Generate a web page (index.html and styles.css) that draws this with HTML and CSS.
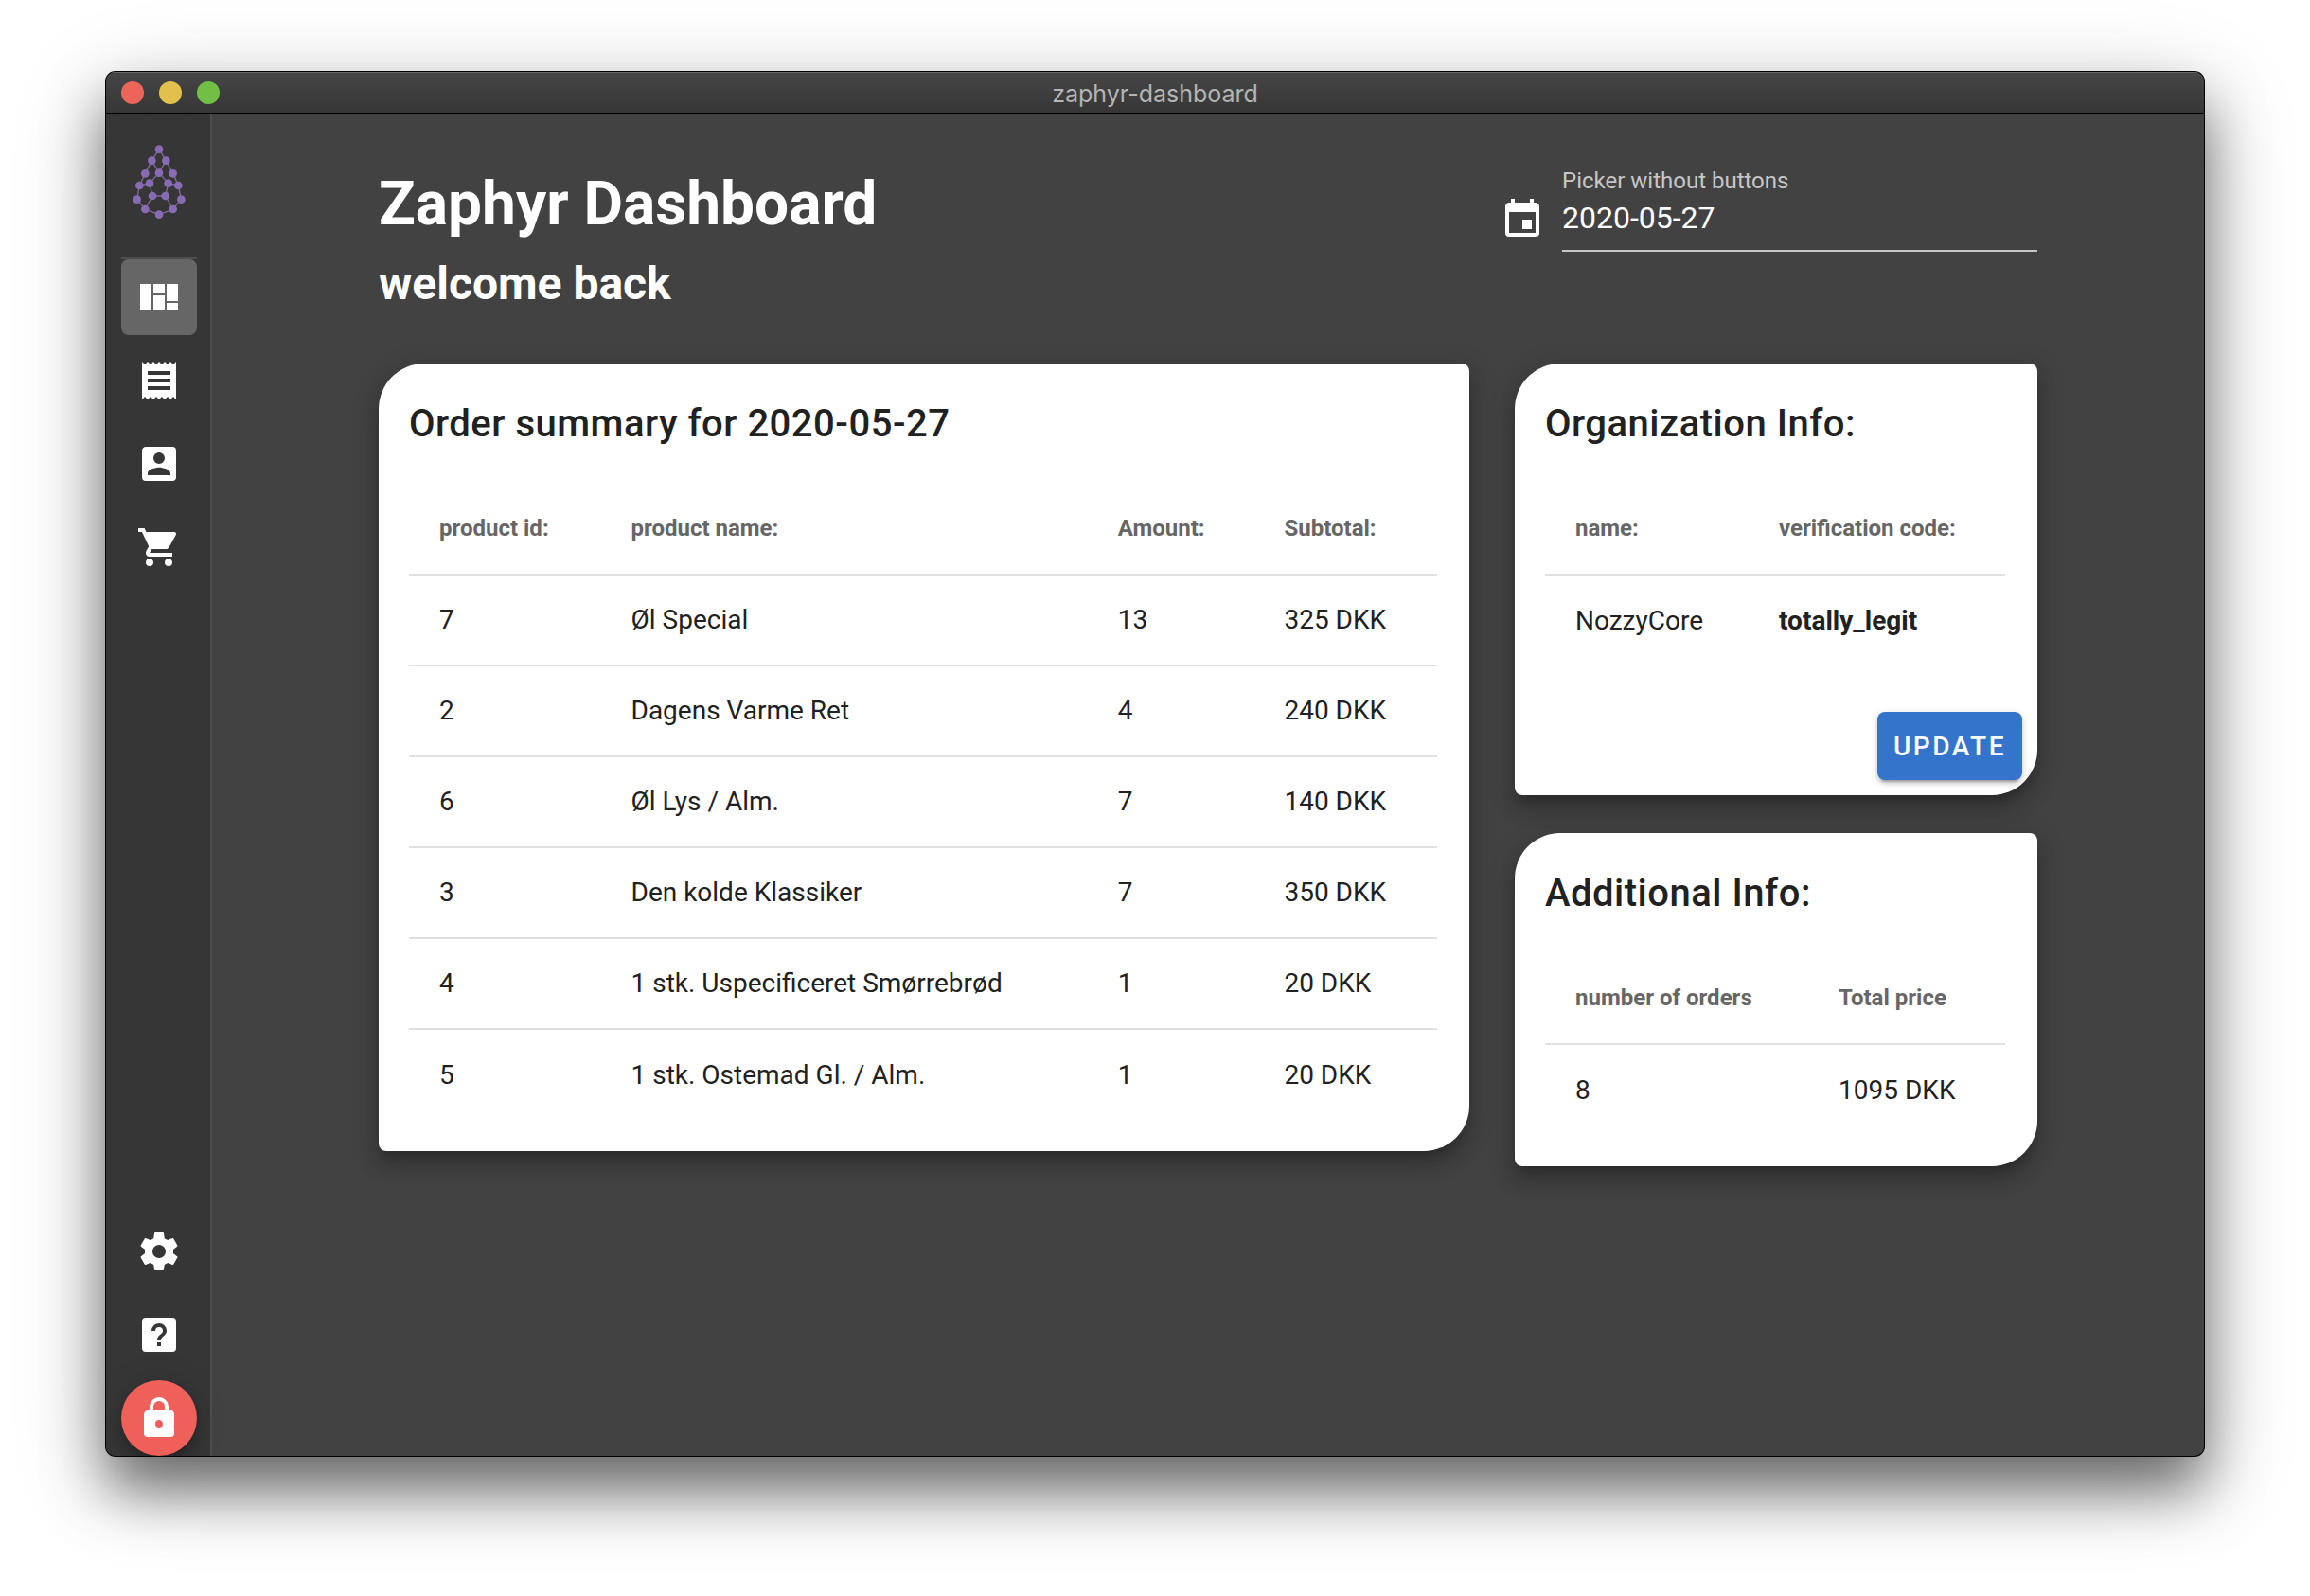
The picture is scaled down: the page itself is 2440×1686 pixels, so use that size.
FILE: index.html
```html
<!DOCTYPE html>
<html lang="en">
<head>
<meta charset="utf-8">
<title>zaphyr-dashboard</title>
<link rel="stylesheet" href="styles.css">
</head>
<body>
<div class="window">
  <header class="titlebar">
    <div class="traffic">
      <button class="light light-close" type="button" aria-label="Close"></button>
      <button class="light light-minimize" type="button" aria-label="Minimize"></button>
      <button class="light light-zoom" type="button" aria-label="Zoom"></button>
    </div>
    <span class="titlebar-text">zaphyr-dashboard</span>
  </header>
  <div class="app">
    <aside class="sidebar">
      <svg class="logo" viewBox="144 276 180 240" aria-hidden="true">
        <path class="logo-links" d="M234 293L211 329L190 370L172 408L164 452L190 483L234 500L278 483L304 452L295 408L278 370L256 329ZM211 329L234 368L256 329M172 408L204 401L234 368L263 401L295 408M204 401L213 441L190 483M263 401L254 441L278 483M213 441H254"/>
        <g class="logo-dots">
          <circle cx="234" cy="293" r="13"/><circle cx="211" cy="329" r="13"/><circle cx="256" cy="329" r="13"/>
          <circle cx="190" cy="370" r="13"/><circle cx="234" cy="368" r="13"/><circle cx="278" cy="370" r="13"/>
          <circle cx="172" cy="408" r="13"/><circle cx="204" cy="401" r="13"/><circle cx="263" cy="401" r="13"/>
          <circle cx="295" cy="408" r="13"/><circle cx="164" cy="452" r="13"/><circle cx="213" cy="441" r="13"/>
          <circle cx="254" cy="441" r="13"/><circle cx="304" cy="452" r="13"/><circle cx="190" cy="483" r="13"/>
          <circle cx="278" cy="483" r="13"/><circle cx="234" cy="500" r="13"/>
        </g>
      </svg>
      <nav class="nav nav-main" aria-label="Main">
        <a class="nav-item nav-item-active" href="#dashboard" aria-label="Dashboard" aria-current="page"><svg class="icon" viewBox="0 0 24 24"><path d="M2,5V19H8V5H2M9,5V10H15V5H9M16,5V14H22V5H16M9,11V19H15V11H9M16,15V19H22V15H16Z"/></svg></a>
        <a class="nav-item" href="#orders" aria-label="Orders"><svg class="icon" viewBox="0 0 24 24"><path d="M3,22L4.5,20.5L6,22L7.5,20.5L9,22L10.5,20.5L12,22L13.5,20.5L15,22L16.5,20.5L18,22L19.5,20.5L21,22V2L19.5,3.5L18,2L16.5,3.5L15,2L13.5,3.5L12,2L10.5,3.5L9,2L7.5,3.5L6,2L4.5,3.5L3,2M18,9H6V7H18M18,13H6V11H18M18,17H6V15H18V17Z"/></svg></a>
        <a class="nav-item" href="#account" aria-label="Account"><svg class="icon" viewBox="0 0 24 24"><path d="M6,17C6,15 10,13.9 12,13.9C14,13.9 18,15 18,17V18H6M15,9A3,3 0 0,1 12,12A3,3 0 0,1 9,9A3,3 0 0,1 12,6A3,3 0 0,1 15,9M3,5V19A2,2 0 0,0 5,21H19A2,2 0 0,0 21,19V5A2,2 0 0,0 19,3H5C3.89,3 3,3.9 3,5Z"/></svg></a>
        <a class="nav-item" href="#products" aria-label="Products"><svg class="icon" viewBox="0 0 24 24"><path d="M17,18C15.89,18 15,18.89 15,20A2,2 0 0,0 17,22A2,2 0 0,0 19,20C19,18.89 18.1,18 17,18M1,2V4H3L6.6,11.59L5.24,14.04C5.09,14.32 5,14.65 5,15A2,2 0 0,0 7,17H19V15H7.42A0.25,0.25 0 0,1 7.17,14.75C7.17,14.7 7.18,14.66 7.2,14.63L8.1,13H15.55C16.3,13 16.96,12.58 17.3,11.97L20.88,5.5C20.95,5.34 21,5.17 21,5A1,1 0 0,0 20,4H5.21L4.27,2M7,18C5.89,18 5,18.89 5,20A2,2 0 0,0 7,22A2,2 0 0,0 9,20C9,18.89 8.1,18 7,18Z"/></svg></a>
      </nav>
      <nav class="nav" aria-label="Application">
        <a class="nav-item" href="#settings" aria-label="Settings"><svg class="icon" viewBox="0 0 24 24"><path d="M12,15.5A3.5,3.5 0 0,1 8.5,12A3.5,3.5 0 0,1 12,8.5A3.5,3.5 0 0,1 15.5,12A3.5,3.5 0 0,1 12,15.5M19.43,12.97C19.47,12.65 19.5,12.33 19.5,12C19.5,11.67 19.47,11.34 19.43,11L21.54,9.37C21.73,9.22 21.78,8.95 21.66,8.73L19.66,5.27C19.54,5.05 19.27,4.96 19.05,5.05L16.56,6.05C16.04,5.66 15.5,5.32 14.87,5.07L14.5,2.42C14.46,2.18 14.25,2 14,2H10C9.75,2 9.54,2.18 9.5,2.42L9.13,5.07C8.5,5.32 7.96,5.66 7.44,6.05L4.95,5.05C4.73,4.96 4.46,5.05 4.34,5.27L2.34,8.73C2.21,8.95 2.27,9.22 2.46,9.37L4.57,11C4.53,11.34 4.5,11.67 4.5,12C4.5,12.33 4.53,12.65 4.57,12.97L2.46,14.63C2.27,14.78 2.21,15.05 2.34,15.27L4.34,18.73C4.46,18.95 4.73,19.03 4.95,18.95L7.44,17.94C7.96,18.34 8.5,18.68 9.13,18.93L9.5,21.58C9.54,21.82 9.75,22 10,22H14C14.25,22 14.46,21.82 14.5,21.58L14.87,18.93C15.5,18.67 16.04,18.34 16.56,17.94L19.05,18.95C19.27,19.03 19.54,18.95 19.66,18.73L21.66,15.27C21.78,15.05 21.73,14.78 21.54,14.63L19.43,12.97Z"/></svg></a>
        <a class="nav-item" href="#help" aria-label="Help"><svg class="icon" viewBox="0 0 24 24"><path d="M11,18H13V16H11V18M12,6A4,4 0 0,0 8,10H10A2,2 0 0,1 12,8A2,2 0 0,1 14,10C14,12 11,11.75 11,15H13C13,12.75 16,12.5 16,10A4,4 0 0,0 12,6M5,3H19A2,2 0 0,1 21,5V19A2,2 0 0,1 19,21H5A2,2 0 0,1 3,19V5A2,2 0 0,1 5,3Z"/></svg></a>
        <button class="nav-item lock" type="button" aria-label="Lock"><svg class="icon" viewBox="0 0 24 24"><path d="M12,17A2,2 0 0,0 14,15C14,13.89 13.1,13 12,13A2,2 0 0,0 10,15A2,2 0 0,0 12,17M18,8A2,2 0 0,1 20,10V20A2,2 0 0,1 18,22H6A2,2 0 0,1 4,20V10C4,8.89 4.9,8 6,8H7V6A5,5 0 0,1 12,1A5,5 0 0,1 17,6V8H18M12,3A3,3 0 0,0 9,6V8H15V6A3,3 0 0,0 12,3Z"/></svg></button>
      </nav>
    </aside>
    <main class="main">
      <div class="container">
        <div class="page-head">
          <div>
            <h1 class="page-title">Zaphyr Dashboard</h1>
            <h2 class="page-subtitle">welcome back</h2>
          </div>
          <div class="picker">
            <svg class="icon picker-icon" viewBox="0 0 24 24" aria-hidden="true"><path d="M19,19H5V8H19M16,1V3H8V1H6V3H5C3.89,3 3,3.89 3,5V19A2,2 0 0,0 5,21H19A2,2 0 0,0 21,19V5C21,3.89 20.1,3 19,3H18V1M17,12H12V17H17V12Z"/></svg>
            <div class="picker-field">
              <label class="picker-label" for="date">Picker without buttons</label>
              <input class="picker-input" id="date" type="text" value="2020-05-27" readonly>
            </div>
          </div>
        </div>
        <div class="cards">
          <section class="card card-orders">
            <h3 class="card-title">Order summary for 2020-05-27</h3>
            <div class="card-body">
              <table class="table">
                <thead><tr><th>product id:</th><th>product name:</th><th>Amount:</th><th>Subtotal:</th></tr></thead>
                <tbody>
                  <tr><td>7</td><td>Øl Special</td><td>13</td><td>325 DKK</td></tr>
                  <tr><td>2</td><td>Dagens Varme Ret</td><td>4</td><td>240 DKK</td></tr>
                  <tr><td>6</td><td>Øl Lys / Alm.</td><td>7</td><td>140 DKK</td></tr>
                  <tr><td>3</td><td>Den kolde Klassiker</td><td>7</td><td>350 DKK</td></tr>
                  <tr><td>4</td><td>1 stk. Uspecificeret Smørrebrød</td><td>1</td><td>20 DKK</td></tr>
                  <tr><td>5</td><td>1 stk. Ostemad Gl. / Alm.</td><td>1</td><td>20 DKK</td></tr>
                </tbody>
              </table>
            </div>
          </section>
          <div class="side">
            <section class="card">
              <h3 class="card-title">Organization Info:</h3>
              <div class="card-body">
                <table class="table">
                  <thead><tr><th>name:</th><th>verification code:</th></tr></thead>
                  <tbody><tr><td>NozzyCore</td><td><strong>totally_legit</strong></td></tr></tbody>
                </table>
              </div>
              <div class="card-actions"><button class="button" type="button">UPDATE</button></div>
            </section>
            <section class="card">
              <h3 class="card-title">Additional Info:</h3>
              <div class="card-body">
                <table class="table">
                  <thead><tr><th>number of orders</th><th>Total price</th></tr></thead>
                  <tbody><tr><td>8</td><td>1095 DKK</td></tr></tbody>
                </table>
              </div>
            </section>
          </div>
        </div>
      </div>
    </main>
  </div>
</div>
</body>
</html>
```
FILE: styles.css
```css
* {
  box-sizing: border-box;
}

body {
  display: flex;
  flex-direction: column;
  min-height: 100vh;
  margin: 0;
  padding: 76px 112px 148px;
  background: #fff;
  font-family: Roboto, "Liberation Sans", sans-serif;
}

button {
  padding: 0;
  border: 0;
  font-family: inherit;
}

/* Window frame */

.window {
  display: flex;
  flex: 1;
  flex-direction: column;
  overflow: hidden;
  border-radius: 10px;
  background: #424242;
  box-shadow: 0 0 0 1px #000, 0 36px 60px rgba(0, 0, 0, 0.5), 0 24px 100px rgba(0, 0, 0, 0.22);
}

.titlebar {
  display: grid;
  grid-template-columns: 1fr auto 1fr;
  align-items: center;
  height: 44px;
  border-bottom: 1px solid #000;
  background: linear-gradient(#464646, #363636);
  box-shadow: inset 0 1px #696969;
}

.traffic {
  display: flex;
  gap: 16px;
  padding-left: 16px;
}

.light {
  width: 24px;
  height: 24px;
  border-radius: 50%;
}

.light-close {
  background: #ed655a;
}

.light-minimize {
  background: #e1c04c;
}

.light-zoom {
  background: #72be47;
}

.titlebar-text {
  padding-top: 2px;
  color: #b4b4b4;
  font-family: Inter, "Liberation Sans", sans-serif;
  font-size: 25px;
  line-height: 32px;
}

.app {
  display: flex;
  flex: 1;
}

/* Sidebar */

.sidebar {
  display: flex;
  flex: none;
  flex-direction: column;
  align-items: center;
  width: 112px;
  padding: 32px 0 0 2px;
  border-right: 2px solid #4e4e4e;
  background: #363636;
}

.logo {
  width: 60px;
  height: 80px;
  margin-bottom: 40px;
}

.logo-links {
  fill: none;
  stroke: #80699f;
  stroke-width: 4;
}

.logo-dots {
  fill: #886bb2;
}

.nav {
  display: flex;
  flex-direction: column;
  gap: 8px;
}

.nav-main {
  margin-bottom: auto;
  border-top: 2px solid #4e4e4e;
}

.nav-item {
  display: flex;
  align-items: center;
  justify-content: center;
  width: 80px;
  height: 80px;
  border-radius: 8px;
  color: #fff;
}

.nav-item-active {
  background: #666;
}

.icon {
  flex: none;
  width: 48px;
  height: 48px;
  fill: currentColor;
}

.lock {
  border-radius: 50%;
  background: #ee6059;
  box-shadow: 0 6px 10px -2px rgba(0, 0, 0, 0.2), 0 12px 20px rgba(0, 0, 0, 0.14), 0 2px 36px rgba(0, 0, 0, 0.12);
}

/* Page */

.main {
  flex: 1;
  padding: 48px 24px;
}

.container {
  max-width: 1752px;
  margin: 0 auto;
}

.page-head {
  display: flex;
  align-items: flex-start;
  justify-content: space-between;
  margin-bottom: 48px;
  color: #fff;
}

.page-title,
.page-subtitle {
  margin: 0;
  font-weight: 700;
  line-height: 1.5;
}

.page-title {
  font-size: 64px;
}

.page-subtitle {
  font-size: 48px;
}

.picker {
  display: flex;
  gap: 18px;
  width: 568px;
  padding-top: 8px;
}

.picker-icon {
  margin-top: 32px;
}

.picker-field {
  display: flex;
  flex: 1;
  flex-direction: column;
  border-bottom: 2px solid #c6c6c6;
}

.picker-label {
  color: #c6c6c6;
  font-size: 24px;
  line-height: 30px;
}

.picker-input {
  width: 100%;
  height: 58px;
  padding: 0 0 10px;
  border: 0;
  outline: 0;
  background: none;
  color: #fff;
  font-family: inherit;
  font-size: 32px;
}

/* Cards */

.cards {
  display: grid;
  grid-template-columns: repeat(12, 1fr);
  gap: 48px;
  align-items: start;
}

.card-orders {
  grid-column: span 8;
}

.side {
  display: flex;
  flex-direction: column;
  grid-column: span 4;
  gap: 40px;
}

.card {
  border-radius: 48px 8px;
  background: #fff;
  box-shadow: 0 10px 10px -6px rgba(0, 0, 0, 0.2), 0 16px 20px 2px rgba(0, 0, 0, 0.14), 0 6px 28px 4px rgba(0, 0, 0, 0.12);
  color: #212121;
}

.card-title {
  margin: 0;
  padding: 32px;
  font-size: 40px;
  font-weight: 500;
  letter-spacing: 0.0125em;
  line-height: 64px;
}

.card-body {
  padding: 0 34px 32px 32px;
}

.card-actions {
  display: flex;
  justify-content: flex-end;
  padding: 16px;
}

.table {
  width: 100%;
  border-spacing: 0;
  text-align: left;
}

.table th,
.table td {
  height: 96px;
  padding: 0 32px 2px;
  border-bottom: 2px solid #e0e0e0;
}

.table th {
  color: #666;
  font-size: 24px;
  font-weight: 700;
}

.table td {
  font-size: 28px;
}

.table tbody tr:last-child td {
  border-bottom: 0;
}

.button {
  height: 72px;
  padding: 0 17px;
  border-radius: 8px;
  background: #3574cb;
  box-shadow: 0 6px 2px -4px rgba(0, 0, 0, 0.2), 0 4px 4px rgba(0, 0, 0, 0.14), 0 2px 10px rgba(0, 0, 0, 0.12);
  color: #fff;
  font-size: 28px;
  font-weight: 500;
  letter-spacing: 0.09em;
}
```
